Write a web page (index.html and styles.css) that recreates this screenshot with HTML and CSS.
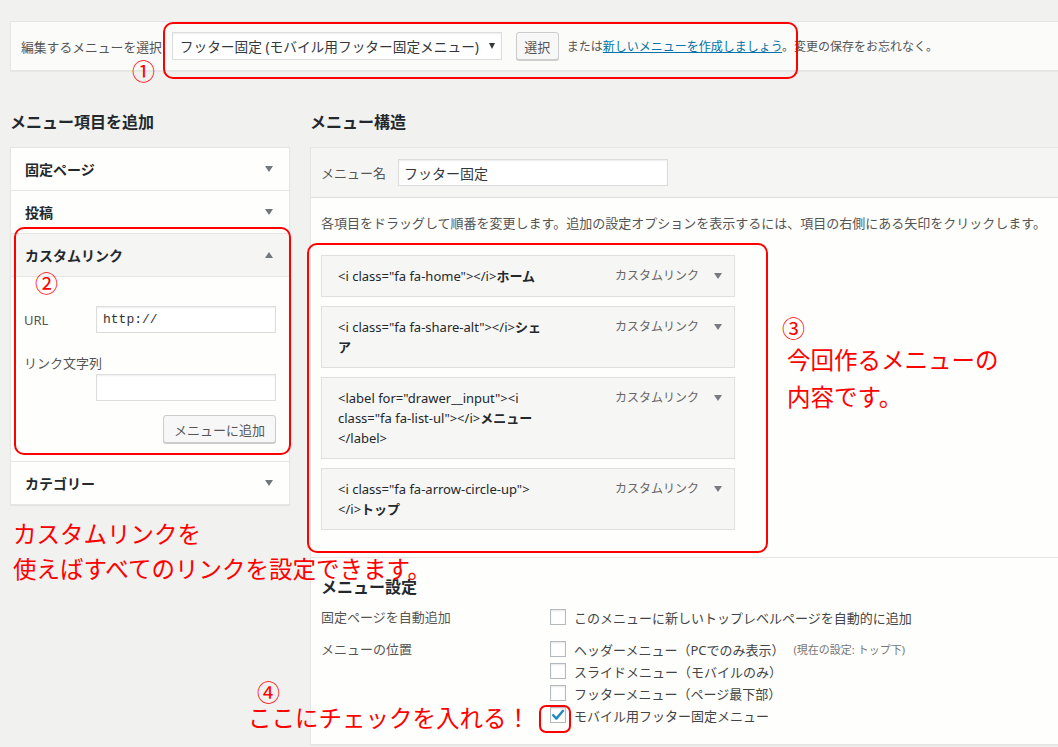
FILE: index.html
```html
<!DOCTYPE html>
<html lang="ja">
<head>
<meta charset="utf-8">
<title>メニュー</title>
<link rel="stylesheet" href="styles.css">
</head>
<body>
<div class="wrap">
  <div class="topbar">
    <span class="tb-label">編集するメニューを選択</span>
    <div class="select"><span>フッター固定 (モバイル用フッター固定メニュー)</span><span class="sel-arrow"></span></div>
    <button class="btn btn-select">選択</button>
    <span class="tb-text">または<a href="#" class="link">新しいメニューを作成しましょう</a>。変更の保存をお忘れなく。</span>
  </div>
  <div class="columns">
    <div class="col-left">
      <h2 class="col-title">メニュー項目を追加</h2>
      <div class="accordion">
        <div class="acc-row"><span class="acc-title">固定ページ</span><span class="tri-down"></span></div>
        <div class="acc-row"><span class="acc-title">投稿</span><span class="tri-down"></span></div>
        <div class="acc-row acc-open"><span class="acc-title">カスタムリンク</span><span class="tri-up"></span></div>
        <div class="acc-body">
          <div class="field-row"><span class="field-label">URL</span><div class="input mono">http://</div></div>
          <div class="field-label2">リンク文字列</div>
          <div class="input input-indent"></div>
          <div class="btn-row"><button class="btn btn-add">メニューに追加</button></div>
        </div>
        <div class="acc-row acc-last"><span class="acc-title">カテゴリー</span><span class="tri-down"></span></div>
      </div>
    </div>
    <div class="col-right">
      <h2 class="col-title">メニュー構造</h2>
      <div class="panel">
        <div class="panel-head"><span class="name-label">メニュー名</span><div class="input name-input">フッター固定</div></div>
        <div class="panel-body">
          <p class="desc">各項目をドラッグして順番を変更します。追加の設定オプションを表示するには、項目の右側にある矢印をクリックします。</p>
          <ul class="items">
            <li class="item"><span class="item-title">&lt;i class="fa fa-home"&gt;&lt;/i&gt;<b>ホーム</b></span><span class="item-type">カスタムリンク</span><span class="tri-down item-arrow"></span></li>
            <li class="item"><span class="item-title">&lt;i class="fa fa-share-alt"&gt;&lt;/i&gt;<b>シェ</b><br><b>ア</b></span><span class="item-type">カスタムリンク</span><span class="tri-down item-arrow"></span></li>
            <li class="item"><span class="item-title">&lt;label for="drawer__input"&gt;&lt;i<br>class="fa fa-list-ul"&gt;&lt;/i&gt;<b>メニュー</b><br>&lt;/label&gt;</span><span class="item-type">カスタムリンク</span><span class="tri-down item-arrow"></span></li>
            <li class="item"><span class="item-title">&lt;i class="fa fa-arrow-circle-up"&gt;<br>&lt;/i&gt;<b>トップ</b></span><span class="item-type">カスタムリンク</span><span class="tri-down item-arrow"></span></li>
          </ul>
        </div>
        <div class="settings">
          <h3 class="settings-title">メニュー設定</h3>
          <div class="set-row set-row1">
            <div class="set-label">固定ページを自動追加</div>
            <div class="set-opts">
              <div class="opt"><span class="cb"></span>このメニューに新しいトップレベルページを自動的に追加</div>
            </div>
          </div>
          <div class="set-row set-row2">
            <div class="set-label">メニューの位置</div>
            <div class="set-opts">
              <div class="opt"><span class="cb"></span>ヘッダーメニュー（PCでのみ表示）<span class="small-note">(現在の設定: トップ下)</span></div>
              <div class="opt"><span class="cb"></span>スライドメニュー（モバイルのみ）</div>
              <div class="opt"><span class="cb"></span>フッターメニュー（ページ最下部）</div>
              <div class="opt"><span class="cb cb-checked"><svg width="14" height="14" viewBox="0 0 14 14"><path d="M2.2 7.2 L5.4 10.6 L12 2.8" fill="none" stroke="#1e8cbe" stroke-width="2.4" stroke-linecap="round" stroke-linejoin="round"/></svg></span>モバイル用フッター固定メニュー</div>
            </div>
          </div>
        </div>
      </div>
    </div>
  </div>
</div>

<div class="mark box1"></div>
<div class="mark box2"></div>
<div class="mark box3"></div>
<div class="mark box4"></div>
<div class="num num1">①</div>
<div class="num num2">②</div>
<div class="num num3">③</div>
<div class="num num4">④</div>
<div class="note note-left">カスタムリンクを<br>使えばすべてのリンクを設定できます。</div>
<div class="note note-right">今回作るメニューの<br>内容です。</div>
<div class="note note-check">ここにチェックを入れる！</div>
</body>
</html>
```

FILE: styles.css
```css
html, body {
  margin: 0;
  padding: 0;
}
body {
  position: relative;
  width: 1058px;
  height: 747px;
  overflow: hidden;
  background: #f1f1ef;
  font-family: "Noto Sans", "Noto Sans CJK JP", sans-serif;
  font-size: 13px;
  color: #444;
}
.wrap {
  width: 1070px;
  padding: 21px 0 0 10px;
  box-sizing: border-box;
}

/* top bar */
.topbar {
  display: flex;
  align-items: center;
  height: 50px;
  box-sizing: border-box;
  border: 1px solid #e5e5e5;
  background: #fbfbf9;
  padding-left: 10px;
  box-shadow: 0 1px 1px rgba(0,0,0,.04);
}
.tb-label {
  font-size: 12.8px;
  color: #555;
  margin-right: 10px;
  white-space: nowrap;
}
.select {
  width: 330px;
  height: 28px;
  box-sizing: border-box;
  border: 1px solid #ddd;
  background: #fff;
  display: flex;
  align-items: center;
  justify-content: space-between;
  padding: 0 6px 0 7px;
  font-size: 13.7px;
  color: #32373c;
  box-shadow: inset 0 1px 2px rgba(0,0,0,.07);
  white-space: nowrap;
}
.sel-arrow {
  width: 0;
  height: 0;
  border-left: 3.5px solid transparent;
  border-right: 3.5px solid transparent;
  border-top: 6px solid #32373c;
}
.btn {
  font-family: inherit;
  font-size: 13px;
  color: #555;
  background: #f7f7f7;
  border: 1px solid #ccc;
  border-radius: 3px;
  box-shadow: 0 1px 0 #ccc;
  padding: 0;
  height: 28px;
}
.btn-select {
  margin-left: 14px;
  width: 43px;
}
.tb-text {
  margin-left: 8px;
  font-size: 12px;
  color: #555;
  white-space: nowrap;
}
.link {
  color: #0073aa;
  text-decoration: underline;
}

/* columns */
.columns {
  display: flex;
  gap: 20px;
}
.col-left {
  width: 280px;
  flex: 0 0 280px;
}
.col-right {
  flex: 1;
}
.col-title {
  margin: 41px 0 15px;
  font-size: 16px;
  line-height: 20px;
  font-weight: 700;
  color: #23282d;
  white-space: nowrap;
}

/* accordion */
.accordion {
  background: #fefefc;
  border: 1px solid #e5e5e5;
  box-shadow: 0 1px 1px rgba(0,0,0,.05);
}
.acc-row {
  height: 43px;
  box-sizing: border-box;
  display: flex;
  align-items: center;
  justify-content: space-between;
  padding: 0 16px 0 14px;
  border-bottom: 1px solid #e5e5e5;
}
.acc-open {
  background: #f5f5f3;
}
.acc-last {
  height: 42px;
  border-bottom: none;
}
.acc-title {
  font-size: 14px;
  font-weight: 700;
  color: #23282d;
}
.tri-down {
  width: 0;
  height: 0;
  border-left: 4px solid transparent;
  border-right: 4px solid transparent;
  border-top: 6px solid #72777c;
}
.tri-up {
  width: 0;
  height: 0;
  border-left: 4px solid transparent;
  border-right: 4px solid transparent;
  border-bottom: 6px solid #72777c;
}
.acc-body {
  padding: 29px 13px 18px 13px;
  border-bottom: 1px solid #e5e5e5;
}
.field-row {
  display: flex;
  align-items: center;
}
.field-label {
  width: 72px;
  font-size: 13px;
  color: #555;
}
.input {
  width: 180px;
  height: 27px;
  box-sizing: border-box;
  border: 1px solid #ddd;
  background: #fff;
  box-shadow: inset 0 1px 2px rgba(0,0,0,.07);
  display: flex;
  align-items: center;
  padding-left: 6px;
  color: #32373c;
}
.mono {
  font-family: "Liberation Mono", "DejaVu Sans Mono", monospace;
  font-size: 13px;
  color: #333;
}
.field-label2 {
  margin-top: 21px;
  line-height: 18px;
  font-size: 13px;
  color: #555;
}
.input-indent {
  margin: 2px 0 0 72px;
}
.btn-row {
  display: flex;
  justify-content: flex-end;
  margin-top: 14px;
}
.btn-add {
  width: 113px;
}

/* right panel */
.panel {
  border: 1px solid #e5e5e5;
  background: #fefefc;
  box-shadow: 0 1px 1px rgba(0,0,0,.04);
}
.panel-head {
  height: 50px;
  box-sizing: border-box;
  background: #f5f5f3;
  border-bottom: 1px solid #dfdfdf;
  display: flex;
  align-items: center;
  padding-left: 10px;
}
.name-label {
  font-size: 13px;
  color: #555;
  margin-right: 12px;
}
.name-input {
  width: 270px;
  font-size: 14px;
  color: #32373c;
  padding-left: 5px;
}
.panel-body {
  padding: 15px 10px 27px;
}
.desc {
  margin: 0 0 22px;
  font-size: 13px;
  line-height: 20px;
  color: #555;
  white-space: nowrap;
}
.items {
  list-style: none;
  margin: 0;
  padding: 0;
  display: flex;
  flex-direction: column;
  gap: 9px;
}
.item {
  width: 414px;
  box-sizing: border-box;
  border: 1px solid #dfdfdf;
  background: #f6f6f4;
  padding: 10px 12px 10px 16px;
  display: flex;
  align-items: flex-start;
}
.item-title {
  font-size: 13px;
  line-height: 20px;
  color: #23282d;
  white-space: nowrap;
}
.item-title b {
  font-weight: 700;
}
.item-type {
  margin-left: auto;
  font-size: 12px;
  line-height: 20px;
  color: #666;
  white-space: nowrap;
}
.item-arrow {
  margin: 7px 0 0 15px;
  border-top-color: #787c82;
}

/* settings */
.settings {
  border-top: 1px solid #e5e5e5;
  padding: 19px 10px 18px;
}
.settings-title {
  margin: 0;
  font-size: 16px;
  line-height: 20px;
  font-weight: 700;
  color: #23282d;
}
.set-row {
  display: flex;
}
.set-row1 {
  margin-top: 9px;
}
.set-row2 {
  margin-top: 10px;
}
.set-label {
  width: 229px;
  flex: 0 0 229px;
  font-size: 13px;
  line-height: 22px;
  color: #555;
}
.opt {
  display: flex;
  align-items: center;
  height: 22px;
  font-size: 13px;
  color: #444;
  white-space: nowrap;
}
.cb {
  width: 16px;
  height: 16px;
  box-sizing: border-box;
  border: 1px solid #b4b9be;
  background: #fff;
  margin-right: 8px;
  box-shadow: inset 0 1px 2px rgba(0,0,0,.1);
  display: flex;
  align-items: center;
  justify-content: center;
  flex: 0 0 16px;
}
.small-note {
  margin-left: 9px;
  font-size: 11px;
  color: #777;
}

/* annotations */
.mark {
  position: absolute;
  border: 2px solid #f00;
  border-radius: 10px;
  box-sizing: border-box;
}
.box1 { left: 163px; top: 22px; width: 635px; height: 57px; }
.box2 { left: 14px; top: 227px; width: 277px; height: 228px; }
.box3 { left: 307px; top: 243px; width: 461px; height: 310px; }
.box4 { left: 539px; top: 705px; width: 32px; height: 28px; border-radius: 7px; }

.num {
  position: absolute;
  color: #f00;
  font-family: "Noto Sans CJK JP", sans-serif;
  font-size: 23px;
  line-height: 21px;
}
.num1 { left: 132px; top: 60px; }
.num2 { left: 35px; top: 272px; }
.num3 { left: 782px; top: 317px; }
.num4 { left: 257px; top: 681px; }

.note {
  position: absolute;
  color: #f00;
  font-family: "Noto Sans CJK JP", sans-serif;
  font-size: 23.5px;
  white-space: nowrap;
}
.note-left { left: 13px; top: 516px; line-height: 35px; }
.note-right { left: 787px; top: 341px; line-height: 37px; }
.note-check { left: 248px; top: 705px; line-height: 24px; }
```
